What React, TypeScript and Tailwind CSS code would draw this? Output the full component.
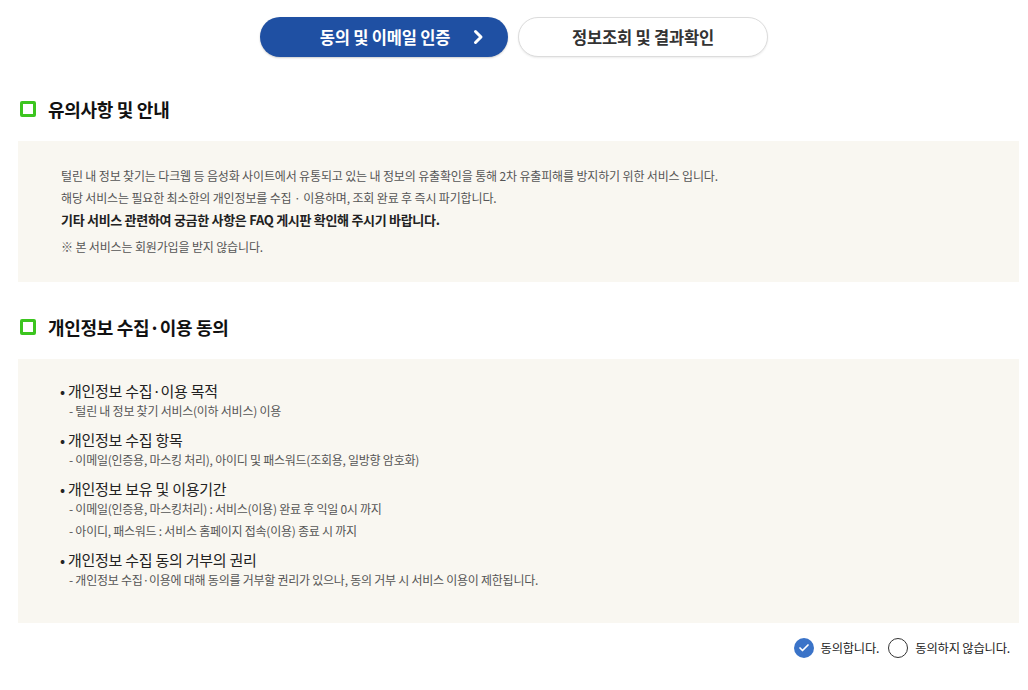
import { Check } from 'lucide-react';

function SectionTitle({ children }: { children: React.ReactNode }) {
  return (
    <div className="flex items-center gap-[12px] pl-[20px] h-[36px]">
      <span className="w-[16px] h-[16px] border-[3px] border-[#3cc51f] rounded-[2px]"></span>
      <h2 className="text-[18px] font-bold text-[#111] tracking-[-0.3px]">{children}</h2>
    </div>
  );
}

const items = [
  { title: '개인정보 수집·이용 목적', subs: ['- 털린 내 정보 찾기 서비스(이하 서비스) 이용'] },
  { title: '개인정보 수집 항목', subs: ['- 이메일(인증용, 마스킹 처리), 아이디 및 패스워드(조회용, 일방향 암호화)'] },
  {
    title: '개인정보 보유 및 이용기간',
    subs: ['- 이메일(인증용, 마스킹처리) : 서비스(이용) 완료 후 익일 0시 까지', '- 아이디, 패스워드 : 서비스 홈페이지 접속(이용) 종료 시 까지'],
  },
  {
    title: '개인정보 수집 동의 거부의 권리',
    subs: ['- 개인정보 수집·이용에 대해 동의를 거부할 권리가 있으나, 동의 거부 시 서비스 이용이 제한됩니다.'],
  },
];

export default function App() {
  return (
    <div className="w-[1028px] h-[690px] bg-white font-['Noto_Sans_CJK_KR',sans-serif] overflow-hidden">
      {/* Step tabs */}
      <div className="flex justify-center gap-[10px] pt-[17px]">
        <div className="w-[248px] h-[40px] rounded-full bg-[#1f50a3] text-white flex items-center justify-center relative shadow-[0_1px_2px_rgba(0,0,0,0.2)]">
          <span className="text-[16.5px] font-bold tracking-[-0.2px] ml-[2px]">동의 및 이메일 인증</span>
          <svg className="absolute right-[22px] top-[12px] w-[16px] h-[16px]" viewBox="0 0 16 16" fill="none">
            <path d="M5.5 2.5l5.5 5.5-5.5 5.5" stroke="white" strokeWidth="3" strokeLinecap="round" strokeLinejoin="round" />
          </svg>
        </div>
        <div className="w-[250px] h-[40px] rounded-full bg-white border border-[#dcdcdc] flex items-center justify-center shadow-[0_1px_2px_rgba(0,0,0,0.08)]">
          <span className="text-[16.5px] font-bold text-[#333] tracking-[-0.2px]">정보조회 및 결과확인</span>
        </div>
      </div>

      <div className="mt-[34px]">
        <SectionTitle>유의사항 및 안내</SectionTitle>
      </div>
      <div className="mx-[18px] mt-[14px] w-[1001px] h-[141px] bg-[#f9f7f1] pl-[43px] pt-[24px] text-[12px] text-[#555] tracking-[-0.15px] leading-[22px]">
        <p>털린 내 정보 찾기는 다크웹 등 음성화 사이트에서 유통되고 있는 내 정보의 유출확인을 통해 2차 유출피해를 방지하기 위한 서비스 입니다.</p>
        <p>해당 서비스는 필요한 최소한의 개인정보를 수집 · 이용하며, 조회 완료 후 즉시 파기합니다.</p>
        <p className="font-bold text-[#222] text-[13px] tracking-[-0.3px]">기타 서비스 관련하여 궁금한 사항은 FAQ 게시판 확인해 주시기 바랍니다.</p>
        <p className="mt-[5px]">※ 본 서비스는 회원가입을 받지 않습니다.</p>
      </div>

      <div className="mt-[27px]">
        <SectionTitle>개인정보 수집·이용 동의</SectionTitle>
      </div>
      <div className="mx-[18px] mt-[14px] w-[1001px] h-[264px] bg-[#f9f7f1] pl-[42px] pt-[23px] tracking-[-0.25px]">
        {items.map((it, i) => (
          <div key={i} className={i === 0 ? '' : 'mt-[9px]'}>
            <p className="text-[15px] text-[#222] leading-[18px]">• {it.title}</p>
            {it.subs.map((s, j) => (
              <p key={j} className="text-[12px] text-[#555] leading-[22px] pl-[9px]">{s}</p>
            ))}
          </div>
        ))}
      </div>

      {/* Agree radios */}
      <div className="flex justify-end items-center pr-[18px] mt-[15px] text-[12.3px] text-[#222] tracking-[-0.2px]">
        <label className="flex items-center gap-[7px]">
          <span className="w-[20px] h-[20px] rounded-full bg-[#3a73c8] flex items-center justify-center">
            <Check className="w-[12px] h-[12px] text-white" strokeWidth={3.5} />
          </span>
          동의합니다.
        </label>
        <label className="flex items-center gap-[7px] ml-[9px]">
          <span className="w-[20px] h-[20px] rounded-full border border-[#333] bg-white"></span>
          동의하지 않습니다.
        </label>
      </div>
    </div>
  );
}
